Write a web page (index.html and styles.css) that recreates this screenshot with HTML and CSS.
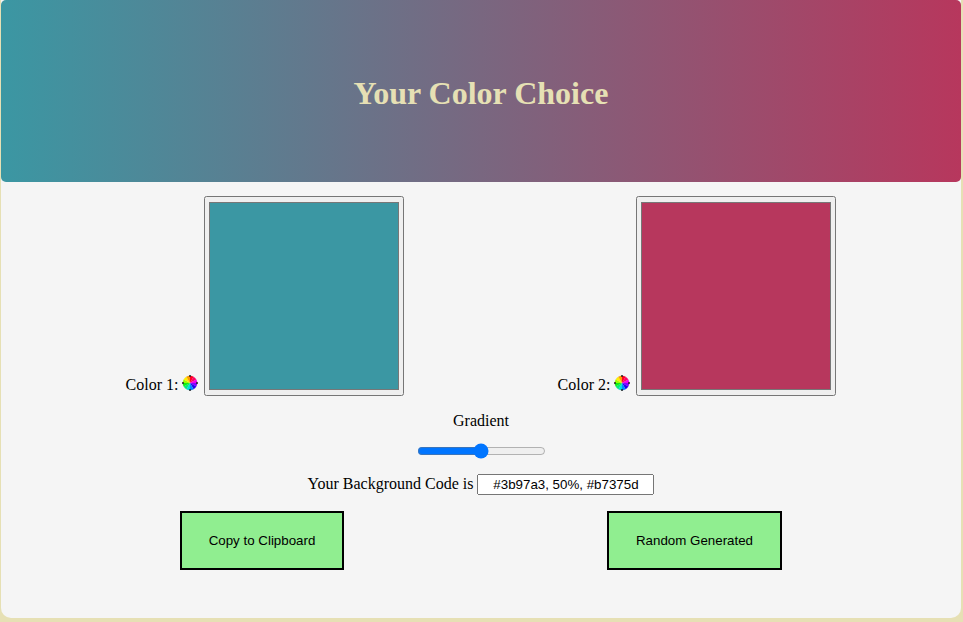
FILE: index.html
```html
<!DOCTYPE html>
<html lang="en">
<head>
<meta charset="utf-8">
<title>Your Color Choice</title>
<link rel="stylesheet" href="styles.css">
</head>
<body>
<svg class="defs" aria-hidden="true">
  <symbol id="wheel" viewBox="0 0 16 16">
    <circle cx="8" cy="8" r="7.5" fill="#ddd"/>
    <path fill="#f02" d="M8 8V.7A7.3 7.3 0 0 1 11.6 1.7z"/>
    <path fill="#f06" d="M8 8l3.6-6.3A7.3 7.3 0 0 1 14.3 4.4z"/>
    <path fill="#e0e" d="M8 8l6.3-3.6A7.3 7.3 0 0 1 15.3 8z"/>
    <path fill="#80f" d="M8 8h7.3A7.3 7.3 0 0 1 14.3 11.6z"/>
    <path fill="#20e" d="M8 8l6.3 3.6A7.3 7.3 0 0 1 11.6 14.3z"/>
    <path fill="#08f" d="M8 8l3.6 6.3A7.3 7.3 0 0 1 8 15.3z"/>
    <path fill="#0dd" d="M8 8v7.3A7.3 7.3 0 0 1 4.4 14.3z"/>
    <path fill="#0e7" d="M8 8l-3.6 6.3A7.3 7.3 0 0 1 1.7 11.6z"/>
    <path fill="#1e1" d="M8 8l-6.3 3.6A7.3 7.3 0 0 1 .7 8z"/>
    <path fill="#9f0" d="M8 8H.7A7.3 7.3 0 0 1 1.7 4.4z"/>
    <path fill="#fe0" d="M8 8L1.7 4.4A7.3 7.3 0 0 1 4.4 1.7z"/>
    <path fill="#f90" d="M8 8L4.4 1.7A7.3 7.3 0 0 1 8 .7z"/>
    <g fill="#222"><circle cx="8" cy="1" r="1"/><circle cx="15" cy="8" r="1"/><circle cx="8" cy="15" r="1"/><circle cx="1" cy="8" r="1"/></g>
  </symbol>
</svg>
<main class="card">
  <header class="preview"><h1>Your Color Choice</h1></header>
  <section class="pickers">
    <div class="picker">
      <label for="c1">Color 1:</label>
      <svg class="wheel"><use href="#wheel"/></svg>
      <input id="c1" class="swatch" type="color" value="#3b97a3">
    </div>
    <div class="picker">
      <label for="c2">Color 2:</label>
      <svg class="wheel"><use href="#wheel"/></svg>
      <input id="c2" class="swatch" type="color" value="#b7375d">
    </div>
  </section>
  <label class="gradient-label" for="mix">Gradient</label>
  <input id="mix" class="mix" type="range" value="50">
  <div class="code"><label for="code">Your Background Code is</label> <input id="code" class="code-field" value="#3b97a3, 50%, #b7375d"></div>
  <div class="actions"><button class="copy">Copy to Clipboard</button><button class="random">Random Generated</button></div>
</main>
</body>
</html>
```
FILE: styles.css
```css
* { box-sizing: border-box; }
body { margin: 0; height: 622px; overflow: hidden; background: #e6e0b4; font: 16px "Liberation Serif", serif; }
.defs { display: none; }
.card { display: flex; flex-direction: column; align-items: center; width: 960px; height: 618px; margin-left: 1px; background: #f5f5f5; border-radius: 0 0 10px 10px; }
.preview { display: flex; align-items: center; justify-content: center; width: 100%; height: 182px; flex: none; border-radius: 5px; background: linear-gradient(to right, #3b97a3, #b7375d); }
h1 { margin: 4px 0 0; font-size: 32px; color: #e6e0b4; }
.pickers { display: flex; width: 100%; padding: 14px 48px 0; }
.picker { flex: 1; text-align: center; height: 200px; white-space: nowrap; }
.wheel { width: 16px; height: 16px; vertical-align: -1px; }
.swatch { width: 200px; height: 200px; margin: 0 0 0 2px; vertical-align: baseline; }
.gradient-label { margin-top: 16px; }
.mix { width: 129px; height: 16px; margin: 13px 0 0; }
.code { margin-top: 15px; }
.code-field { width: 177px; height: 21px; text-align: center; font: 13.333px "Liberation Sans", sans-serif; }
.actions { display: flex; width: 100%; margin-top: 16px; }
button { height: 59px; border: 2px solid #000; background: lightgreen; font: 13.333px "Liberation Sans", sans-serif; }
.copy { width: 164px; margin-left: 179px; }
.random { width: 175px; margin-left: 263px; }
```
